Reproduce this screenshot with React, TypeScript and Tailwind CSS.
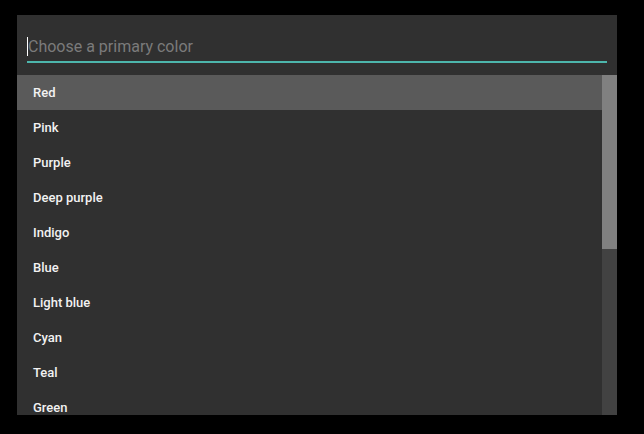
import React from "react";

const colors = ["Red", "Pink", "Purple", "Deep purple", "Indigo", "Blue", "Light blue", "Cyan", "Teal", "Green"];

export default function App() {
  return (
    <div className="w-[644px] h-[434px] bg-black pt-[15px] pl-[17px]" style={{ fontFamily: "Roboto, 'Noto Sans', sans-serif" }}>
      <div className="w-[600px] h-[400px] bg-[#303030] flex flex-col overflow-hidden">
        <div className="pt-4 pb-3 px-[10px] shrink-0">
          <div className="relative h-[32px] border-b-2 border-[#4db6ac] flex items-center pt-[2px]">
            <span className="absolute left-0 top-[6px] w-px h-[19px] bg-white" />
            <input
              readOnly
              placeholder="Choose a primary color"
              className="w-full bg-transparent outline-none text-[16px] text-white placeholder:text-[#7b7b7b] pl-px"
            />
          </div>
        </div>
        <div className="flex flex-1 min-h-0">
          <div className="flex-1 flex flex-col">
            {colors.map((c, i) => (
              <div
                key={c}
                className={`h-[35px] shrink-0 flex items-center pl-4 text-[13px] font-medium text-[#f2f2f2] ${i === 0 ? "bg-[#5a5a5a]" : ""}`}
              >
                {c}
              </div>
            ))}
          </div>
          <div className="w-[15px] bg-[#424242] flex flex-col">
            <div className="h-[174px] bg-[#808080]" />
          </div>
        </div>
      </div>
    </div>
  );
}
